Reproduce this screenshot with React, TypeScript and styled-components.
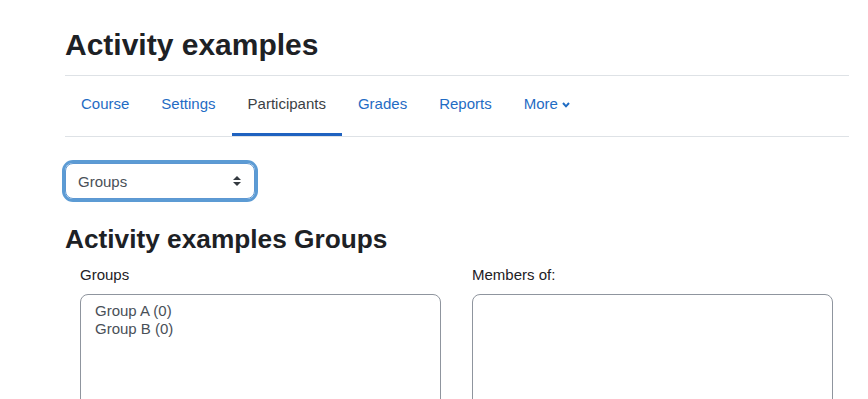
import React from "react";
import styled, { createGlobalStyle } from "styled-components";

const GlobalStyle = createGlobalStyle`
  html, body {
    margin: 0;
    padding: 0;
    overflow: hidden;
    background: #ffffff;
  }
  body {
    font-family: "Liberation Sans", Arial, Helvetica, sans-serif;
    color: #1d2125;
  }
  * { box-sizing: border-box; }
`;

const Page = styled.div`
  width: 868px;
  height: 399px;
  overflow: hidden;
  padding: 0 19px 0 65px;
`;

const Header = styled.header`
  padding: 27px 0 12px;
`;

const Title = styled.h1`
  margin: 0;
  font-size: 30px;
  line-height: 36px;
  font-weight: 700;
  color: #1d2125;
`;

const Nav = styled.nav`
  display: flex;
  border-top: 1px solid #dee2e6;
  border-bottom: 1px solid #dee2e6;
  height: 62px;
`;

const NavLink = styled.a<{ $active?: boolean }>`
  display: flex;
  align-items: center;
  gap: 4px;
  height: 60px;
  padding: 0 16px;
  font-size: 15px;
  line-height: 22.5px;
  text-decoration: none;
  color: ${(p) => (p.$active ? "#3a3f44" : "#1f6cc4")};
  border-bottom: 3px solid ${(p) => (p.$active ? "#1f62c0" : "transparent")};
  cursor: pointer;
`;

const SelectBox = styled.div`
  margin-top: 26px;
  width: 190px;
  height: 36px;
  display: flex;
  align-items: center;
  justify-content: space-between;
  padding: 0 13px 0 12px;
  border: 1px solid #5d97d2;
  border-radius: 8px;
  box-shadow: 0 0 0 3px rgba(15, 108, 191, 0.68);
  font-size: 15px;
  color: #495057;
`;

const SubTitle = styled.h2`
  margin: 25px 0 0;
  font-size: 26.25px;
  line-height: 31.5px;
  font-weight: 700;
  color: #1d2125;
`;

const Columns = styled.div`
  margin-top: 8px;
  display: grid;
  grid-template-columns: 392px 392px;
`;

const Column = styled.div`
  padding: 0 16px 0 15px;
`;

const Label = styled.div`
  font-size: 15px;
  line-height: 22.5px;
  color: #1d2125;
  margin-bottom: 8px;
`;

const ListBox = styled.div`
  width: 361px;
  height: 140px;
  border: 1px solid #8f959e;
  border-radius: 8px;
  padding: 7px 12px;
`;

const Option = styled.div`
  font-size: 15px;
  line-height: 18px;
  padding: 0 2px;
  color: #495057;
`;

const Chevron = () => (
  <svg width="8" height="6" viewBox="0 0 8 6" aria-hidden="true">
    <polyline points="1,1 4,4.3 7,1" fill="none" stroke="#1f6cc4" strokeWidth="2" />
  </svg>
);

const Arrows = () => (
  <svg width="8" height="10" viewBox="0 0 4 5" aria-hidden="true">
    <path d="M2 0L0 2h4zm0 5L0 3h4z" fill="#343a40" />
  </svg>
);

export default function App() {
  const tabs = ["Course", "Settings", "Participants", "Grades", "Reports"];
  return (
    <>
      <GlobalStyle />
      <Page>
        <Header>
          <Title>Activity examples</Title>
        </Header>
        <Nav>
          {tabs.map((t) => (
            <NavLink key={t} $active={t === "Participants"}>
              {t}
            </NavLink>
          ))}
          <NavLink>
            More
            <Chevron />
          </NavLink>
        </Nav>
        <SelectBox>
          <span>Groups</span>
          <Arrows />
        </SelectBox>
        <SubTitle>Activity examples Groups</SubTitle>
        <Columns>
          <Column>
            <Label>Groups</Label>
            <ListBox>
              <Option>Group A (0)</Option>
              <Option>Group B (0)</Option>
            </ListBox>
          </Column>
          <Column>
            <Label>Members of:</Label>
            <ListBox />
          </Column>
        </Columns>
      </Page>
    </>
  );
}
